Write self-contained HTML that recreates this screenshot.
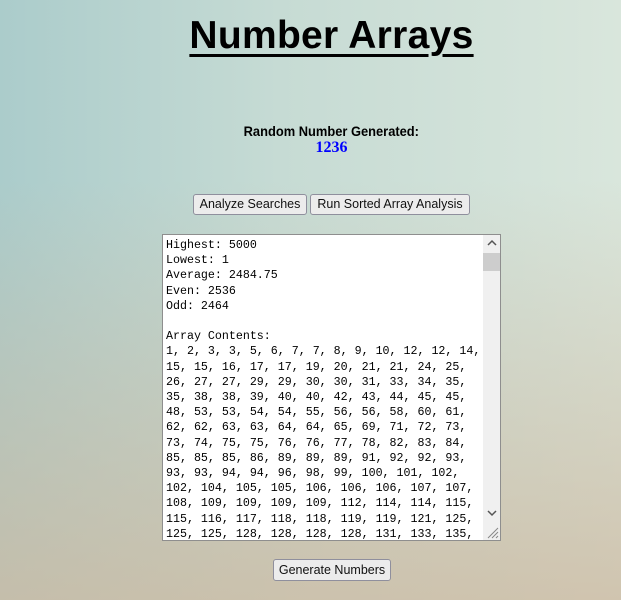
<!DOCTYPE html>
<html><head><style>
html,body{margin:0;padding:0}
body{width:621px;height:600px;overflow:hidden;position:relative;font-family:"Liberation Sans",sans-serif;
background:linear-gradient(180deg,rgba(0,0,0,0) 0%,rgba(0,0,0,0) 30%,rgba(205,185,160,0.75) 100%),linear-gradient(90deg,#abcccb 0%,#c6dbd4 45%,#d9e6dc 100%);}
h1{position:absolute;left:42px;width:579px;top:14px;margin:0;text-align:center;font-size:39px;font-weight:bold;text-decoration:underline;text-decoration-thickness:3px;text-underline-offset:6px;letter-spacing:0.3px}
.lbl{position:absolute;left:42px;width:579px;top:123px;text-align:center;font-weight:bold;font-size:14px}
.lbl span{display:inline-block;transform:scaleX(0.92)}
.num{position:absolute;left:42px;width:579px;top:139px;text-align:center;font-family:"Liberation Serif",serif;font-weight:bold;color:#0000ff;font-size:16px}
.btn{position:absolute;height:19px;border:1px solid #8f8f9d;border-radius:3px;background:#ececec;font-size:12.5px;line-height:19px;text-align:center;color:#111;box-sizing:content-box}
.ta{position:absolute;left:162px;top:234px;width:337px;height:305px;border:1px solid #8e8e8e;background:#fff;overflow:hidden}
.txt{position:absolute;left:3px;top:3px;font-family:"Liberation Mono",monospace;font-size:11.65px;line-height:15.2px;white-space:pre;color:#000}
.sb{position:absolute;left:320px;top:0;width:17px;height:305px;background:#f0f0f0}
.thumb{position:absolute;left:320px;top:18px;width:17px;height:18px;background:#cdcdcd}
</style></head><body>
<h1>Number Arrays</h1>
<div class="lbl"><span>Random Number Generated:</span></div>
<div class="num">1236</div>
<div class="btn" style="left:193px;top:194px;width:112px">Analyze Searches</div>
<div class="btn" style="left:310px;top:194px;width:158px">Run Sorted Array Analysis</div>
<div class="ta">
<div class="txt">Highest: 5000
Lowest: 1
Average: 2484.75
Even: 2536
Odd: 2464

Array Contents:
1, 2, 3, 3, 5, 6, 7, 7, 8, 9, 10, 12, 12, 14,
15, 15, 16, 17, 17, 19, 20, 21, 21, 24, 25,
26, 27, 27, 29, 29, 30, 30, 31, 33, 34, 35,
35, 38, 38, 39, 40, 40, 42, 43, 44, 45, 45,
48, 53, 53, 54, 54, 55, 56, 56, 58, 60, 61,
62, 62, 63, 63, 64, 64, 65, 69, 71, 72, 73,
73, 74, 75, 75, 76, 76, 77, 78, 82, 83, 84,
85, 85, 85, 86, 89, 89, 89, 91, 92, 92, 93,
93, 93, 94, 94, 96, 98, 99, 100, 101, 102,
102, 104, 105, 105, 106, 106, 106, 107, 107,
108, 109, 109, 109, 109, 112, 114, 114, 115,
115, 116, 117, 118, 118, 119, 119, 121, 125,
125, 125, 128, 128, 128, 128, 131, 133, 135,</div>
<div class="sb"></div><div class="thumb"></div>
<svg style="position:absolute;left:324px;top:4px" width="10" height="8"><path d="M1 6 L5 2 L9 6" fill="none" stroke="#555" stroke-width="1.5"/></svg>
<svg style="position:absolute;left:324px;top:274px" width="10" height="8"><path d="M1 2 L5 6 L9 2" fill="none" stroke="#555" stroke-width="1.5"/></svg>
<svg style="position:absolute;left:323px;top:291px" width="13" height="13"><path d="M12 2 L2 12 M12 6 L6 12 M12 10 L10 12" stroke="#888" stroke-width="1"/></svg>
</div>
<div class="btn" style="left:273px;top:559px;width:116px;height:20px;line-height:20px">Generate Numbers</div>
</body></html>
